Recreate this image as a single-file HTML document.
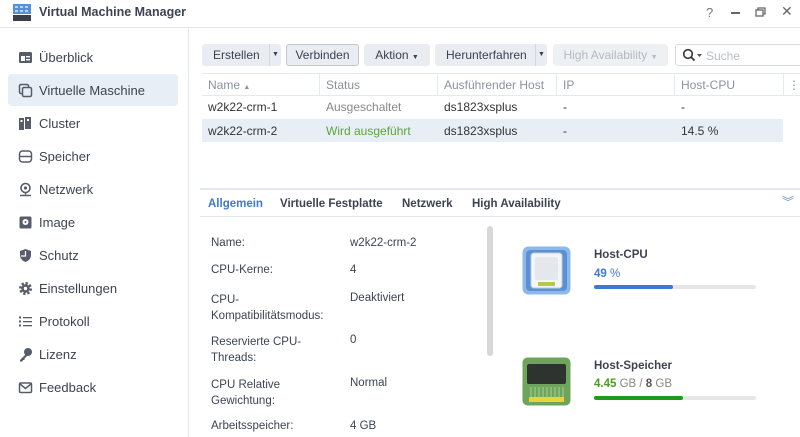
<!DOCTYPE html><html><head><style>
*{margin:0;padding:0;box-sizing:border-box}
body{width:800px;height:437px;overflow:hidden;background:#fff;font-family:"Liberation Sans",sans-serif;font-size:12px;color:#333;position:relative}
.a{position:absolute;white-space:nowrap}
.nav{position:absolute;left:0;width:188px;height:33px}
.nav .t{position:absolute;left:39px;top:9px;font-size:13px;color:#3b4451}
.nav .i{position:absolute;left:18px;top:9px;width:15px;height:15px}
.btn{position:absolute;top:44px;height:22px;background:#e9edf2;border-radius:3px;font-size:12px;color:#3a4250;line-height:22px}
.th{color:#8a929c}
.lbl{color:#3b4451;font-size:11.5px}
</style></head><body>
<!-- title bar -->
<div class="a" style="left:0;top:0;width:800px;height:28px;border-bottom:1px solid #e4e7eb"></div>
<svg class="a" style="left:12px;top:3px" width="20" height="19"><rect x="1" y="1" width="18" height="10" fill="#5a8fd8"/><rect x="1" y="12" width="18" height="6" fill="#3a3f48"/><g fill="#b9d3f4"><rect x="3" y="3" width="3" height="2"/><rect x="8" y="3" width="3" height="2"/><rect x="13" y="3" width="3" height="2"/><rect x="3" y="7" width="3" height="2"/><rect x="8" y="7" width="3" height="2"/><rect x="13" y="7" width="3" height="2"/></g></svg>
<div class="a" style="left:39px;top:5px;font-size:12.5px;font-weight:bold;color:#3b4451">Virtual Machine Manager</div>
<div class="a" style="left:706px;top:5px;color:#777;font-size:13px">?</div>
<div class="a" style="left:731px;top:12px;width:9px;height:1.5px;background:#666"></div>
<svg class="a" style="left:755px;top:7px" width="11" height="10"><rect x="1" y="3" width="7" height="6" fill="none" stroke="#666" stroke-width="1.3"/><path d="M3 3V1h7v6H8" fill="none" stroke="#666" stroke-width="1.3"/></svg>
<div class="a" style="left:781px;top:3px;color:#666;font-size:14px">✕</div>
<!-- sidebar -->
<div class="a" style="left:188px;top:29px;width:1px;height:408px;background:#e4e7eb"></div>
<div class="a" style="left:8px;top:74px;width:170px;height:32px;background:#e8eef6;border-radius:4px"></div>
<div class="nav" style="top:41px"><svg class="i" viewBox="0 0 15 15"><rect x="1" y="2" width="13" height="11" rx="1.5" fill="#555d68"/><rect x="3" y="6" width="4" height="5" fill="#fff"/><rect x="8" y="6" width="4" height="1.4" fill="#fff"/><rect x="8" y="9" width="4" height="1.4" fill="#fff"/></svg><span class="t">Überblick</span></div>
<div class="nav" style="top:74px"><svg class="i" viewBox="0 0 15 15"><rect x="1.5" y="1.5" width="9" height="9" rx="1.5" fill="none" stroke="#555d68" stroke-width="1.5"/><rect x="4.5" y="4.5" width="9" height="9" rx="1.5" fill="#e8eef6" stroke="#555d68" stroke-width="1.5"/></svg><span class="t">Virtuelle Maschine</span></div>
<div class="nav" style="top:107px"><svg class="i" viewBox="0 0 15 15"><rect x="1" y="2" width="5" height="12" fill="#555d68"/><rect x="7" y="1" width="6" height="12" fill="#555d68"/><rect x="2.5" y="4" width="2" height="2" fill="#fff"/><rect x="9" y="3" width="2" height="2" fill="#fff"/></svg><span class="t">Cluster</span></div>
<div class="nav" style="top:140px"><svg class="i" viewBox="0 0 15 15"><rect x="1.5" y="2" width="12" height="11" rx="3" fill="none" stroke="#555d68" stroke-width="1.5"/><path d="M2 7.5h11" stroke="#555d68" stroke-width="1.5"/></svg><span class="t">Speicher</span></div>
<div class="nav" style="top:173px"><svg class="i" viewBox="0 0 15 15"><circle cx="7.5" cy="6" r="4.5" fill="none" stroke="#555d68" stroke-width="1.6"/><circle cx="7.5" cy="6" r="1.6" fill="#555d68"/><path d="M7.5 10.5v2M2 13.5h11" stroke="#555d68" stroke-width="1.6"/></svg><span class="t">Netzwerk</span></div>
<div class="nav" style="top:206px"><svg class="i" viewBox="0 0 15 15"><rect x="1.5" y="1.5" width="12" height="12" rx="1.5" fill="#555d68"/><circle cx="7.5" cy="7" r="3" fill="#fff"/><circle cx="7.5" cy="7" r="1" fill="#555d68"/></svg><span class="t">Image</span></div>
<div class="nav" style="top:239px"><svg class="i" viewBox="0 0 15 15"><path d="M7.5 1L13 3v4c0 3.5-2.5 6-5.5 7C4.5 13 2 10.5 2 7V3z" fill="#555d68"/><path d="M7.5 3v5H3" stroke="#fff" stroke-width="1.2" fill="none"/></svg><span class="t">Schutz</span></div>
<div class="nav" style="top:272px"><svg class="i" viewBox="0 0 15 15"><circle cx="7.5" cy="7.5" r="5" fill="none" stroke="#555d68" stroke-width="3" stroke-dasharray="2.2 1.7"/><circle cx="7.5" cy="7.5" r="4.2" fill="#555d68"/><circle cx="7.5" cy="7.5" r="1.7" fill="#fff"/></svg><span class="t">Einstellungen</span></div>
<div class="nav" style="top:305px"><svg class="i" viewBox="0 0 15 15"><g fill="#555d68"><rect x="1" y="2.5" width="2" height="2"/><rect x="1" y="6.5" width="2" height="2"/><rect x="1" y="10.5" width="2" height="2"/><rect x="5" y="3" width="9" height="1.3"/><rect x="5" y="7" width="9" height="1.3"/><rect x="5" y="11" width="9" height="1.3"/></g></svg><span class="t">Protokoll</span></div>
<div class="nav" style="top:338px"><svg class="i" viewBox="0 0 15 15"><circle cx="10" cy="5" r="4" fill="#555d68"/><path d="M8 7L2 13v1.5h2.5L5 13h1.5v-1.5L10 8" fill="#555d68"/></svg><span class="t">Lizenz</span></div>
<div class="nav" style="top:371px"><svg class="i" viewBox="0 0 15 15"><rect x="1.5" y="3" width="12" height="9.5" rx="1.3" fill="none" stroke="#555d68" stroke-width="1.5"/><path d="M2 4l5.5 4.5L13 4" fill="none" stroke="#555d68" stroke-width="1.5"/></svg><span class="t">Feedback</span></div>
<!-- toolbar -->
<div class="btn" style="left:202px;width:79px"><span style="margin-left:11px">Erstellen</span><span style="position:absolute;left:67px;top:0;height:22px;border-left:1px solid #d3d8de;width:12px;text-align:center;font-size:7px">▼</span></div>
<div class="btn" style="left:286px;width:73px;border:1px solid #c3c8ce;background:#e9edf2;line-height:20px;text-align:center">Verbinden</div>
<div class="btn" style="left:364px;width:66px;text-align:center">Aktion <span style="font-size:7px">▼</span></div>
<div class="btn" style="left:435px;width:112px"><span style="margin-left:11px">Herunterfahren</span><span style="position:absolute;left:100px;top:0;height:22px;border-left:1px solid #d3d8de;width:12px;text-align:center;font-size:7px">▼</span></div>
<div class="btn" style="left:553px;width:115px;color:#b4bac2;background:#eef1f4;text-align:center">High Availability <span style="font-size:7px">▼</span></div>
<div class="a" style="left:675px;top:44px;width:130px;height:22px;border:1px solid #d6dade;border-radius:3px"></div>
<svg class="a" style="left:682px;top:48px" width="22" height="14"><circle cx="6" cy="6" r="4.3" fill="none" stroke="#333" stroke-width="1.6"/><path d="M9 9l3.5 3.5" stroke="#333" stroke-width="1.7"/><path d="M15 6h5l-2.5 3z" fill="#555"/></svg>
<div class="a" style="left:706px;top:49px;color:#b8bec6">Suche</div>
<!-- table -->
<div class="a" style="left:202px;top:73px;width:598px;height:23px;border-top:1px solid #e6e9ec;border-bottom:1px solid #e6e9ec"></div>
<div class="a" style="left:319px;top:73px;width:1px;height:23px;background:#e6e9ec"></div>
<div class="a" style="left:437px;top:73px;width:1px;height:23px;background:#e6e9ec"></div>
<div class="a" style="left:556px;top:73px;width:1px;height:23px;background:#e6e9ec"></div>
<div class="a" style="left:674px;top:73px;width:1px;height:23px;background:#e6e9ec"></div>
<div class="a" style="left:783px;top:73px;width:1px;height:23px;background:#e6e9ec"></div>
<div class="a th" style="left:208px;top:78px">Name <span style="font-size:7px">▲</span></div>
<div class="a th" style="left:326px;top:78px">Status</div>
<div class="a th" style="left:444px;top:78px">Ausführender Host</div>
<div class="a th" style="left:563px;top:78px">IP</div>
<div class="a th" style="left:681px;top:78px">Host-CPU</div>
<div class="a th" style="left:788px;top:78px">⋮</div>
<div class="a" style="left:202px;top:119px;width:581px;height:23px;background:#e8eef6"></div>
<div class="a" style="left:208px;top:100px">w2k22-crm-1</div>
<div class="a" style="left:326px;top:100px;color:#888">Ausgeschaltet</div>
<div class="a" style="left:444px;top:100px">ds1823xsplus</div>
<div class="a" style="left:563px;top:100px">-</div>
<div class="a" style="left:681px;top:100px">-</div>
<div class="a" style="left:208px;top:124px">w2k22-crm-2</div>
<div class="a" style="left:326px;top:124px;color:#5aa63a">Wird ausgeführt</div>
<div class="a" style="left:444px;top:124px">ds1823xsplus</div>
<div class="a" style="left:563px;top:124px">-</div>
<div class="a" style="left:681px;top:124px">14.5 %</div>
<!-- detail tabs -->
<div class="a" style="left:200px;top:188px;width:600px;height:2px;background:#e3e8ef"></div>
<div class="a" style="left:200px;top:216px;width:600px;height:1px;background:#e3e8ef"></div>
<div class="a" style="left:208px;top:198px;font-weight:bold;color:#3f7ad0;font-size:11.5px">Allgemein</div>
<div class="a" style="left:280px;top:198px;font-weight:bold;color:#3b4451;font-size:11.5px">Virtuelle Festplatte</div>
<div class="a" style="left:402px;top:198px;font-weight:bold;color:#3b4451;font-size:11.5px">Netzwerk</div>
<div class="a" style="left:472px;top:198px;font-weight:bold;color:#3b4451;font-size:11.5px">High Availability</div>
<div class="a" style="left:782px;top:193px;color:#5b8fd6;font-size:12px">︾</div>
<div class="a lbl" style="left:211px;top:237px">Name:</div><div class="a lbl" style="left:350px;top:237px">w2k22-crm-2</div>
<div class="a lbl" style="left:211px;top:264px">CPU-Kerne:</div><div class="a lbl" style="left:350px;top:264px">4</div>
<div class="a lbl" style="left:211px;top:292px;line-height:16px">CPU-<br>Kompatibilitätsmodus:</div><div class="a lbl" style="left:350px;top:292px">Deaktiviert</div>
<div class="a lbl" style="left:211px;top:334px;line-height:16px">Reservierte CPU-<br>Threads:</div><div class="a lbl" style="left:350px;top:334px">0</div>
<div class="a lbl" style="left:211px;top:377px;line-height:16px">CPU Relative<br>Gewichtung:</div><div class="a lbl" style="left:350px;top:377px">Normal</div>
<div class="a lbl" style="left:211px;top:420px">Arbeitsspeicher:</div><div class="a lbl" style="left:350px;top:420px">4 GB</div>
<div class="a" style="left:487px;top:226px;width:6px;height:130px;background:#d8d8d8;border-radius:3px"></div>
<!-- CPU -->
<svg class="a" style="left:522px;top:246px" width="49" height="49"><rect x="0.5" y="0.5" width="48" height="48" rx="6" fill="#8cb8ea"/><rect x="4" y="4" width="41" height="41" rx="4" fill="#5b91d4"/><rect x="9" y="7" width="31" height="35" rx="3" fill="#f3f5f8" stroke="#c7ccd2"/><rect x="13" y="11" width="23" height="23" rx="2" fill="#e4e7eb"/><rect x="16" y="36" width="17" height="4" fill="#b4c94a"/></svg>
<div class="a" style="left:594px;top:249px;font-weight:bold;color:#3b4451;font-size:11.5px">Host-CPU</div>
<div class="a" style="left:594px;top:268px;color:#3f7ad0;font-size:11.5px"><b>49</b> %</div>
<div class="a" style="left:594px;top:285px;width:162px;height:4px;background:#e6e6e6;border-radius:2px"><div style="width:79px;height:4px;background:#3a7ad5;border-radius:2px"></div></div>
<!-- Mem -->
<svg class="a" style="left:522px;top:357px" width="49" height="49"><rect x="0.5" y="0.5" width="48" height="48" rx="5" fill="#6ea55a"/><rect x="5" y="7" width="39" height="20" rx="2" fill="#2f3330"/><g stroke="#a9cf95" stroke-width="1"><path d="M9 30v11M13 30v11M17 30v11M21 30v11M25 30v11M29 30v11M33 30v11M37 30v11M41 30v11"/></g><rect x="7" y="40" width="35" height="5" fill="#e9d23a"/></svg>
<div class="a" style="left:594px;top:360px;font-weight:bold;color:#3b4451;font-size:11.5px">Host-Speicher</div>
<div class="a" style="left:594px;top:378px;font-size:11.5px;color:#888"><b style="color:#4a9a25">4.45</b> GB / <b style="color:#555">8</b> GB</div>
<div class="a" style="left:594px;top:396px;width:162px;height:4px;background:#e6e6e6;border-radius:2px"><div style="width:89px;height:4px;background:#1e9a1e;border-radius:2px"></div></div>
</body></html>
